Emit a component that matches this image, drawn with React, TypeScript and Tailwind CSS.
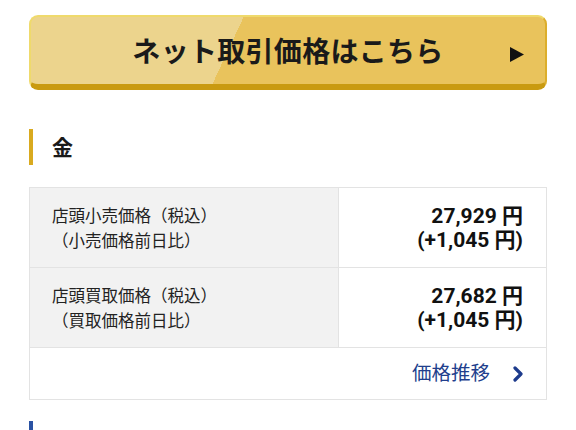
import React from 'react';

const rows = [
  { label: '店頭小売価格（税込）', sub: '（小売価格前日比）', price: '27,929 円', diff: '(+1,045 円)' },
  { label: '店頭買取価格（税込）', sub: '（買取価格前日比）', price: '27,682 円', diff: '(+1,045 円)' },
];

const App: React.FC = () => {
  return (
    <div className="h-screen w-full overflow-hidden bg-white px-[29px] pt-[15px] font-['Roboto','Noto_Sans_CJK_JP',sans-serif] text-[#1a1a1a]">
      {/* ネット取引ボタン */}
      <button className="relative flex h-[75px] w-full items-center justify-center rounded-[9px] border-2 border-b-[6px] border-[#efda6c] border-b-[#c99a10] border-r-[#dcae2c] bg-[linear-gradient(115deg,#ecd48d_39%,#e9c35c_39%)] pt-[5px]">
        <span className="text-[28px] font-bold tracking-[0.3px] text-[#1a1a1a]">ネット取引価格はこちら</span>
        <svg className="absolute right-[21px] top-[30px] h-[15px] w-[14px]" viewBox="0 0 14 15">
          <polygon points="0,0 14,7.5 0,15" fill="#111" />
        </svg>
      </button>

      {/* 見出し */}
      <div className="mt-[39px] flex h-9 items-center border-l-4 border-[#d9aa1f] pl-[19px] pt-[2px]">
        <h2 className="text-[21px] font-bold leading-none">金</h2>
      </div>

      {/* 価格テーブル */}
      <div className="mt-[22px] border border-[#e3e3e3]">
        {rows.map((r) => (
          <div key={r.label} className="flex h-[80px] border-b border-[#e3e3e3]">
            <div className="flex w-[309px] flex-col justify-center border-r border-[#e3e3e3] bg-[#f2f2f2] pl-[22px] pt-[3px] text-[16.5px] leading-[25px] text-[#222]">
              <span>{r.label}</span>
              <span>{r.sub}</span>
            </div>
            <div className="flex flex-1 flex-col items-end justify-center pr-[23px] text-[21px] font-bold leading-[24px] text-[#111]">
              <span>{r.price}</span>
              <span>{r.diff}</span>
            </div>
          </div>
        ))}
        <a href="#" className="flex h-[51px] items-center justify-end gap-[23px] pr-[23px] text-[19.5px] text-[#213e8c]">
          <span>価格推移</span>
          <svg className="h-[16px] w-[10px]" viewBox="0 0 10 16" fill="none">
            <path d="M2 2l6 6-6 6" stroke="#1d3b8c" strokeWidth="3.2" strokeLinecap="round" strokeLinejoin="round" />
          </svg>
        </a>
      </div>

      {/* 次の見出し */}
      <div className="mt-[21px] h-9 border-l-4 border-[#2a52a3]" />
    </div>
  );
};

export default App;
